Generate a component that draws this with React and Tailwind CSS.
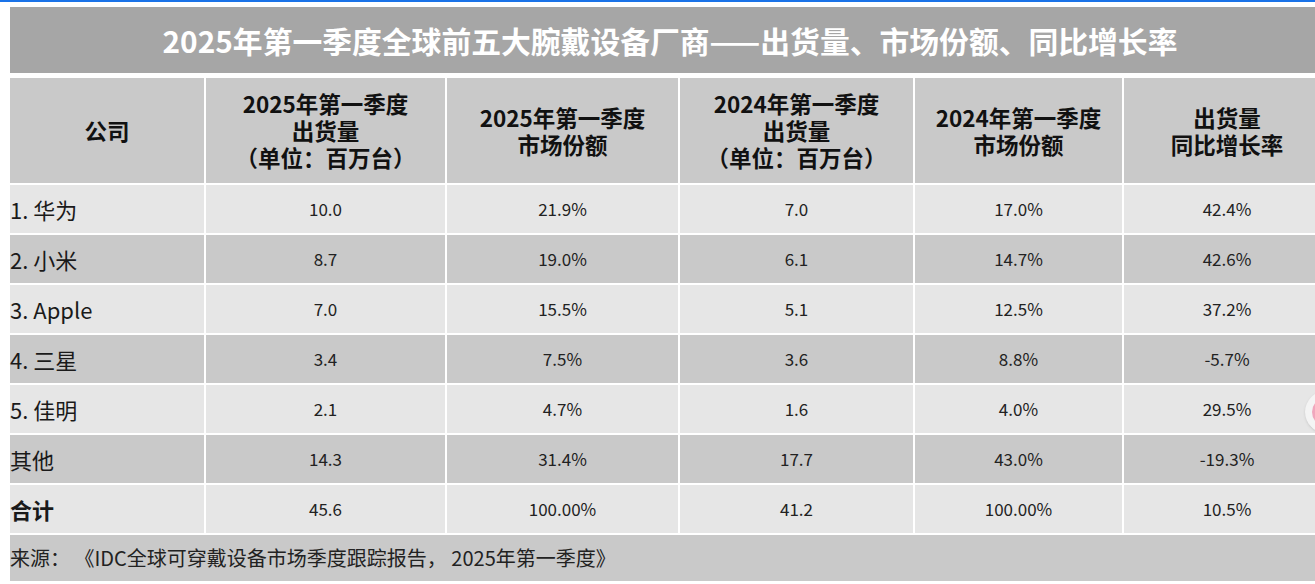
const font = { fontFamily: '"Noto Sans CJK SC", "Noto Sans", sans-serif' };

const headers = [
  ['公司'],
  ['2025年第一季度', '出货量', '（单位：百万台）'],
  ['2025年第一季度', '市场份额'],
  ['2024年第一季度', '出货量', '（单位：百万台）'],
  ['2024年第一季度', '市场份额'],
  ['出货量', '同比增长率'],
];

const rows = [
  ['1. 华为', '10.0', '21.9%', '7.0', '17.0%', '42.4%'],
  ['2. 小米', '8.7', '19.0%', '6.1', '14.7%', '42.6%'],
  ['3. Apple', '7.0', '15.5%', '5.1', '12.5%', '37.2%'],
  ['4. 三星', '3.4', '7.5%', '3.6', '8.8%', '-5.7%'],
  ['5. 佳明', '2.1', '4.7%', '1.6', '4.0%', '29.5%'],
  ['其他', '14.3', '31.4%', '17.7', '43.0%', '-19.3%'],
  ['合计', '45.6', '100.00%', '41.2', '100.00%', '10.5%'],
];

const cols = 'grid grid-cols-[194px_239px_231px_233px_207px_206px] gap-x-[2px]';

export default function App() {
  return (
    <div className="relative w-[1315px] h-[584px] overflow-hidden bg-white text-[#1a1a1a]" style={font}>
      <div className="h-[2px] bg-[#1a73e8]" />
      <div className="w-[1320px] ml-[10px] mt-[5px] flex flex-col">
        <div className="h-[66px] bg-[#a6a6a6] flex items-center justify-center text-white text-[29.8px] font-bold">
          2025年第一季度全球前五大腕戴设备厂商——出货量、市场份额、同比增长率
        </div>
        <div className={`${cols} mt-[5px]`}>
          {headers.map((h, i) => (
            <div key={i} className="h-[105px] bg-[#c9c9c9] flex flex-col items-center justify-center text-[22.5px] font-bold leading-[27px] text-[#111]">
              {h.map((l, j) => (
                <span key={j}>{l}</span>
              ))}
            </div>
          ))}
        </div>
        {rows.map((r, ri) => (
          <div key={ri} className={`${cols} mt-[2px]`}>
            {r.map((c, ci) => (
              <div
                key={ci}
                className={`h-[48px] flex items-center ${ri % 2 === 0 ? 'bg-[#e6e6e6]' : 'bg-[#c9c9c9]'} ${
                  ci === 0 ? `text-[22px] ${ri === 6 ? 'font-bold' : ''}` : 'justify-center text-[17px] text-[#222]'
                }`}
              >
                {c}
              </div>
            ))}
          </div>
        ))}
        <div className="h-[46px] mt-[2px] bg-[#c9c9c9] flex items-center text-[20px] text-[#222]">
          来源： 《IDC全球可穿戴设备市场季度跟踪报告， 2025年第一季度》
        </div>
      </div>
      <div className="absolute left-[1305px] top-[391px] w-[42px] h-[42px] rounded-full bg-[#f4f4f4] flex items-center pl-[7px] shadow-sm">
        <div className="w-[28px] h-[28px] rounded-full bg-[#f0a7bd]" />
      </div>
    </div>
  );
}
